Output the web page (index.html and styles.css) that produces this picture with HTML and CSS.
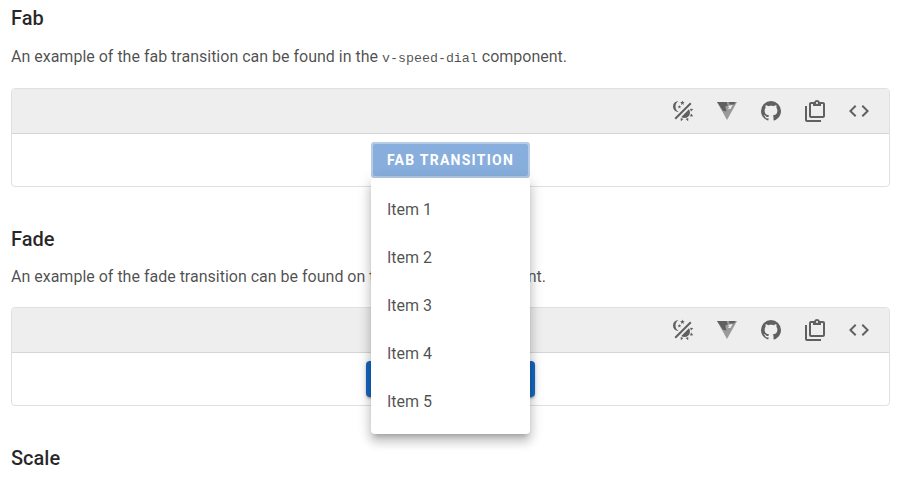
FILE: index.html
```html
<!DOCTYPE html>
<html lang="en">
<head>
    <meta charset="UTF-8">
    <meta name="viewport" content="width=device-width, initial-scale=1.0">
    <title>Transitions</title>
    <link rel="stylesheet" href="styles.css">
</head>
<body>
    <svg class="icon-defs" width="0" height="0">
        <symbol id="i-theme" viewBox="0 0 24 24"><path d="M7.5,2C5.71,3.15 4.5,5.18 4.5,7.5C4.5,9.82 5.71,11.85 7.53,13C4.46,13 2,10.54 2,7.5A5.5,5.5 0 0,1 7.5,2M19.07,3.5L20.5,4.93L4.93,20.5L3.5,19.07L19.07,3.5M12.89,5.93L11.41,5L9.97,6L10.39,4.3L9,3.24L10.75,3.12L11.33,1.47L12,3.1L13.73,3.13L12.38,4.26L12.89,5.93M9.59,9.54L8.43,8.81L7.31,9.59L7.65,8.27L6.56,7.44L7.92,7.35L8.37,6.06L8.88,7.33L10.24,7.36L9.19,8.23L9.59,9.54M19,13.5A5.5,5.5 0 0,1 13.5,19C12.28,19 11.15,18.6 10.24,17.93L17.93,10.24C18.6,11.15 19,12.28 19,13.5M14.6,20.08L17.37,18.93L17.13,22.28L14.6,20.08M18.93,17.38L20.08,14.6L22.28,17.15L18.93,17.38M20.08,12.42L18.94,9.64L22.28,9.88L20.08,12.42M9.63,18.93L12.41,20.08L9.87,22.27L9.63,18.93Z"/></symbol>
        <symbol id="i-vuetify" viewBox="0 0 24 24"><path class="icon-light" d="M2 3H22L12 21Z"/><path d="M2 3H11.6L12.8 6.4L10.2 7.6L11.4 12.4L8 11.8Z"/><path d="M13.8 3H20.6L19 5.6L14.6 5.4Z"/><path class="icon-cut" d="M13 7L17.6 6L15.4 10L12.8 10L14.4 8.4Z"/></symbol>
        <symbol id="i-github" viewBox="0 0 24 24"><path d="M12,2A10,10 0 0,0 2,12C2,16.42 4.87,20.17 8.84,21.5C9.34,21.58 9.5,21.27 9.5,21C9.5,20.77 9.5,20.14 9.5,19.31C6.73,19.91 6.14,17.97 6.14,17.97C5.68,16.81 5.03,16.5 5.03,16.5C4.12,15.88 5.1,15.9 5.1,15.9C6.1,15.97 6.63,16.93 6.63,16.93C7.5,18.45 8.97,18 9.54,17.76C9.63,17.11 9.89,16.67 10.17,16.42C7.95,16.17 5.62,15.31 5.62,11.5C5.62,10.39 6,9.5 6.65,8.79C6.55,8.54 6.2,7.5 6.75,6.15C6.75,6.15 7.59,5.88 9.5,7.17C10.29,6.95 11.15,6.84 12,6.84C12.85,6.84 13.71,6.95 14.5,7.17C16.41,5.88 17.25,6.15 17.25,6.15C17.8,7.5 17.45,8.54 17.35,8.79C18,9.5 18.38,10.39 18.38,11.5C18.38,15.32 16.04,16.16 13.81,16.41C14.17,16.72 14.5,17.33 14.5,18.26C14.5,19.6 14.5,20.68 14.5,21C14.5,21.27 14.66,21.59 15.17,21.5C19.14,20.16 22,16.42 22,12A10,10 0 0,0 12,2Z"/></symbol>
        <symbol id="i-clipboard" viewBox="0 0 24 24"><path d="M4 7V21H18V23H4C2.9 23 2 22.1 2 21V7H4M20 3C21.1 3 22 3.9 22 5V17C22 18.1 21.1 19 20 19H8C6.9 19 6 18.1 6 17V5C6 3.9 6.9 3 8 3H11.18C11.6 1.84 12.7 1 14 1C15.3 1 16.4 1.84 16.82 3H20M14 3C13.45 3 13 3.45 13 4C13 4.55 13.45 5 14 5C14.55 5 15 4.55 15 4C15 3.45 14.55 3 14 3M10 7V5H8V17H20V5H18V7H10Z"/></symbol>
        <symbol id="i-code" viewBox="0 0 24 24"><path d="M14.6,16.6L19.2,12L14.6,7.4L16,6L22,12L16,18L14.6,16.6M9.4,16.6L4.8,12L9.4,7.4L8,6L2,12L8,18L9.4,16.6Z"/></symbol>
    </svg>

    <main class="page">
        <section class="section section-first">
            <h2 class="title">Fab</h2>
            <p class="text">An example of the fab transition can be found in the <code class="inline-code">v-speed-dial</code> component.</p>
            <div class="example">
                <div class="toolbar">
                    <svg class="tool"><use href="#i-theme"/></svg>
                    <svg class="tool"><use href="#i-vuetify"/></svg>
                    <svg class="tool"><use href="#i-github"/></svg>
                    <svg class="tool"><use href="#i-clipboard"/></svg>
                    <svg class="tool"><use href="#i-code"/></svg>
                </div>
                <div class="demo">
                    <div class="menu-anchor">
                        <button class="btn btn-active">Fab Transition</button>
                        <ul class="menu">
                            <li>Item 1</li>
                            <li>Item 2</li>
                            <li>Item 3</li>
                            <li>Item 4</li>
                            <li>Item 5</li>
                        </ul>
                    </div>
                </div>
            </div>
        </section>

        <section class="section">
            <h2 class="title">Fade</h2>
            <p class="text">An example of the fade transition can be found on the carousel component.</p>
            <div class="example">
                <div class="toolbar">
                    <svg class="tool"><use href="#i-theme"/></svg>
                    <svg class="tool"><use href="#i-vuetify"/></svg>
                    <svg class="tool"><use href="#i-github"/></svg>
                    <svg class="tool"><use href="#i-clipboard"/></svg>
                    <svg class="tool"><use href="#i-code"/></svg>
                </div>
                <div class="demo">
                    <button class="btn">Fade Transition</button>
                </div>
            </div>
        </section>

        <section class="section">
            <h2 class="title">Scale</h2>
        </section>
    </main>
</body>
</html>
```

FILE: styles.css
```css
html, body {
    margin: 0;
    height: 485px;
    overflow: hidden;
    background-color: #fff;
}

body {
    font-family: Roboto, sans-serif;
    color: rgba(0, 0, 0, 0.87);
}

.icon-defs {
    position: absolute;
}

.page {
    padding: 0 15px 0 11px;
}

.section {
    margin-bottom: 34px;
}

.section:last-child {
    margin-bottom: 0;
}

.title {
    margin: 0;
    height: 36px;
    line-height: 36px;
    font-size: 20px;
    font-weight: 500;
    color: rgba(0, 0, 0, 0.85);
}

.text {
    margin: 6px 0 17px;
    height: 27px;
    line-height: 27px;
    font-size: 16px;
    color: rgba(0, 0, 0, 0.7);
}

.section-first .text {
    margin: 7px 0 18px;
}

.inline-code {
    font-family: "Liberation Mono", monospace;
    font-size: 13.3px;
}

.example {
    border: 1px solid #e0e0e0;
    border-radius: 4px;
}

.toolbar {
    display: flex;
    justify-content: flex-end;
    align-items: center;
    gap: 20px;
    height: 44px;
    padding-right: 18px;
    background-color: #eeeeee;
    border-bottom: 1px solid #d6d6d6;
    border-radius: 4px 4px 0 0;
}

.tool {
    width: 24px;
    height: 24px;
    fill: #606060;
}

.icon-light {
    fill: #9a9a9a;
}

.icon-cut {
    fill: #eeeeee;
}

.demo {
    display: flex;
    justify-content: center;
    padding: 8px 0;
    height: 36px;
}

.menu-anchor {
    position: relative;
}

.btn {
    height: 36px;
    padding: 0 16px;
    border: none;
    border-radius: 4px;
    background-color: #1565c0;
    color: #fff;
    font-family: Roboto, sans-serif;
    font-size: 14px;
    font-weight: 700;
    letter-spacing: 1.25px;
    text-transform: uppercase;
    box-shadow: 0 3px 1px -2px rgba(0, 0, 0, 0.2), 0 2px 2px 0 rgba(0, 0, 0, 0.14), 0 1px 5px 0 rgba(0, 0, 0, 0.12);
}

.btn-active {
    background-color: #87aedd;
    box-shadow: 0 0 0 2px #b5cbe6 inset;
}

.menu {
    position: absolute;
    top: 36px;
    left: 0;
    z-index: 2;
    width: 100%;
    margin: 0;
    padding: 8px 0;
    list-style: none;
    background-color: #fff;
    border-radius: 4px;
    box-shadow: 0 5px 5px -3px rgba(0, 0, 0, 0.2), 0 8px 10px 1px rgba(0, 0, 0, 0.14), 0 3px 14px 2px rgba(0, 0, 0, 0.12);
}

.menu li {
    height: 48px;
    line-height: 48px;
    padding: 0 16px;
    font-size: 16px;
    color: rgba(0, 0, 0, 0.7);
}
```
